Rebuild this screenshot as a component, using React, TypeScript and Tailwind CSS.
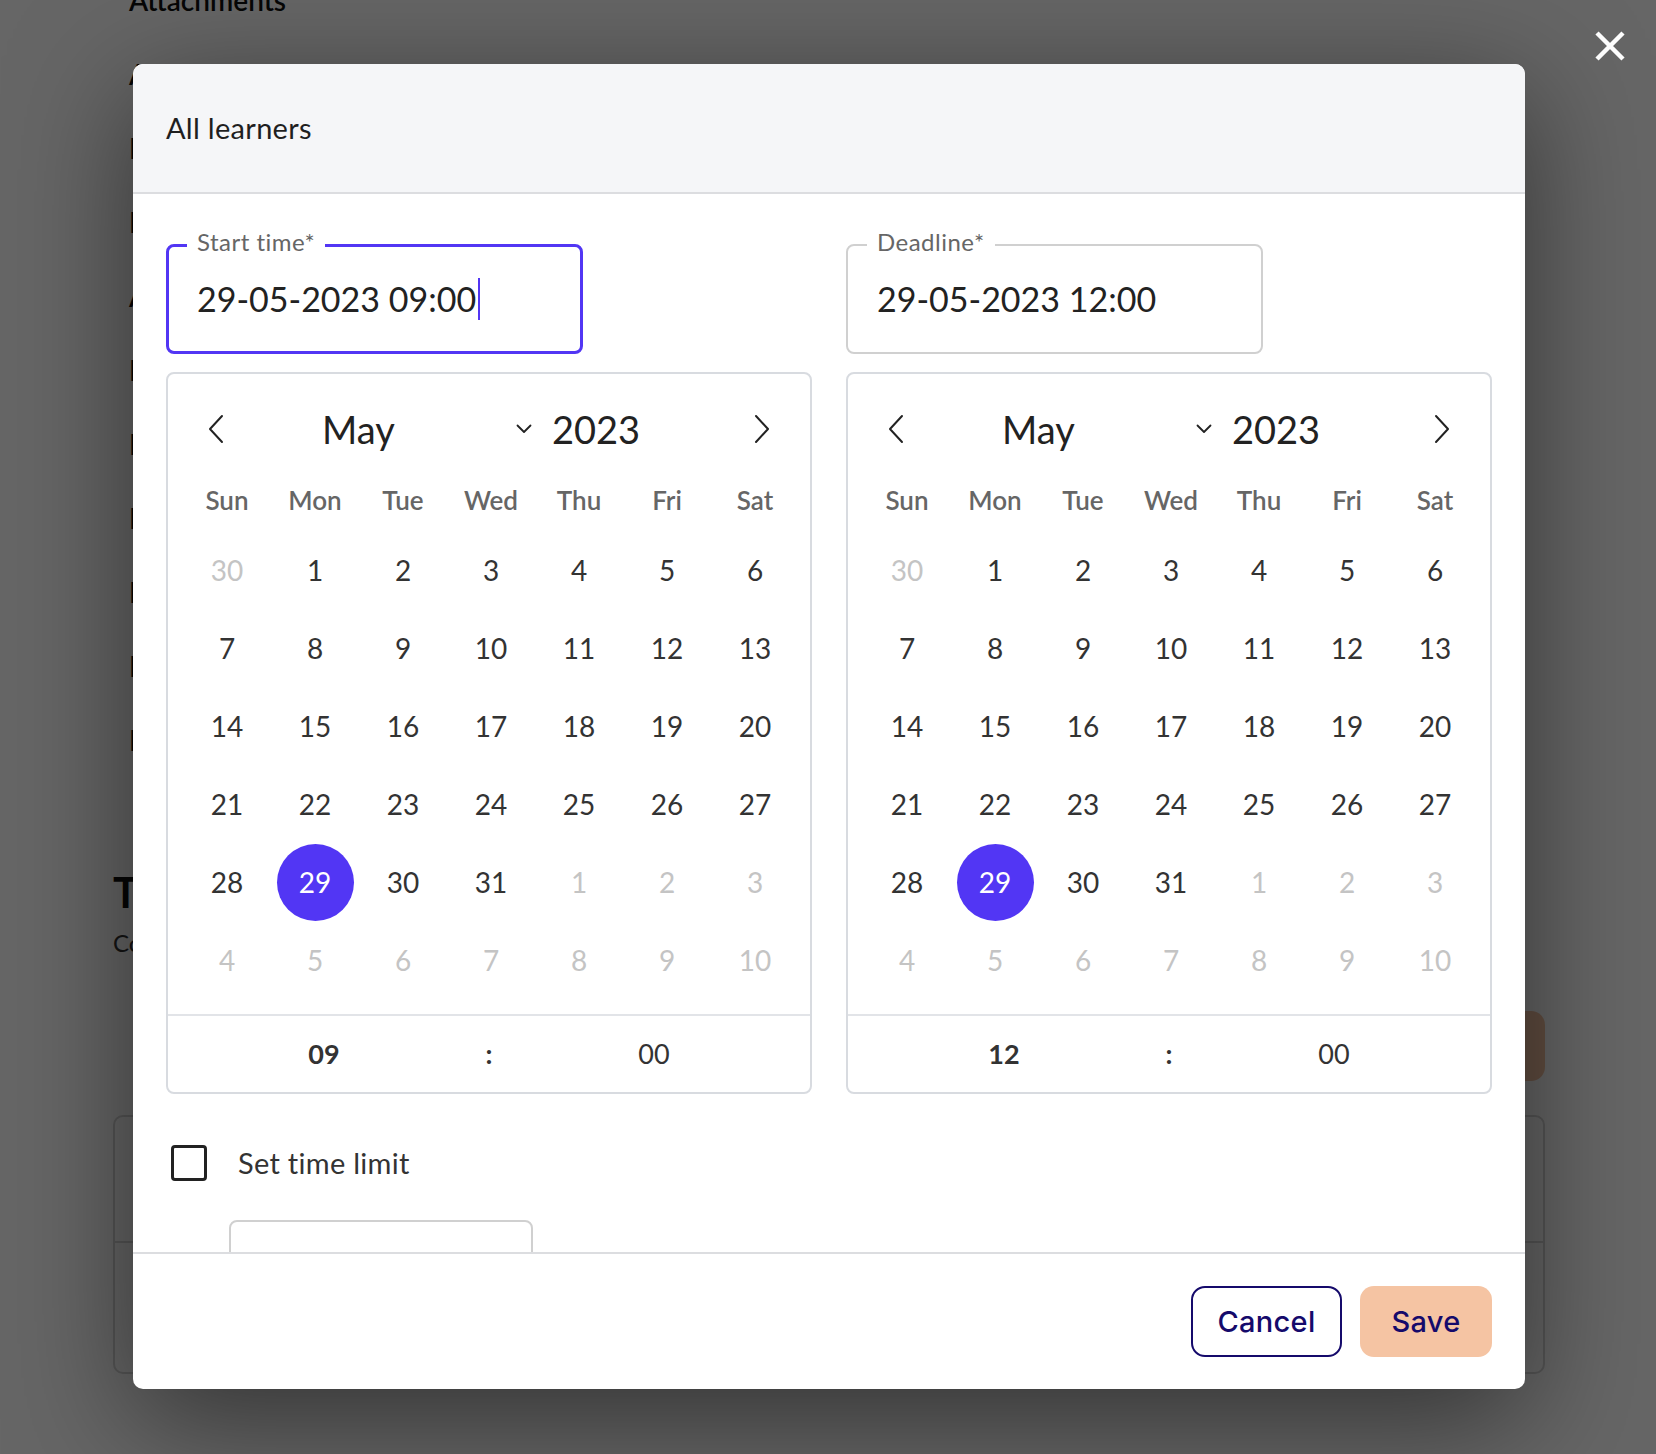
import { useState } from "react"

type Day = { n: number; muted?: boolean }

// May 2023 laid out Sun..Sat, with the tail of April and head of June
const days: Day[] = [
  { n: 30, muted: true },
  ...Array.from({ length: 31 }, (_, i) => ({ n: i + 1 })),
  ...Array.from({ length: 10 }, (_, i) => ({ n: i + 1, muted: true })),
]

const weekdays = ["Sun", "Mon", "Tue", "Wed", "Thu", "Fri", "Sat"]

const backgroundLabels = [
  "Attachments",
  "Availability",
  "Instructions",
  "Points",
  "Attempts",
  "Materials",
  "Peer review",
  "Rubric",
  "Notifications",
  "Evaluation",
  "Language",
]

const ArrowLeft = () => (
  <svg width="16" height="30" viewBox="0 0 16 30" fill="none">
    <polyline points="14,2 2,15 14,28" stroke="#222" strokeWidth="2" strokeLinejoin="round" strokeLinecap="round" />
  </svg>
)

const ArrowRight = () => (
  <svg width="16" height="30" viewBox="0 0 16 30" fill="none">
    <polyline points="2,2 14,15 2,28" stroke="#222" strokeWidth="2" strokeLinejoin="round" strokeLinecap="round" />
  </svg>
)

const CaretDown = () => (
  <svg width="16" height="10" viewBox="0 0 16 10" fill="none">
    <polyline points="1.5,1.5 8,8 14.5,1.5" stroke="#222" strokeWidth="1.8" strokeLinecap="round" strokeLinejoin="round" />
  </svg>
)

const DateInput = ({ label, value, focused }: { label: string; value: string; focused?: boolean }) => (
  <div
    className={
      focused
        ? "relative flex h-[110px] w-[417px] items-center rounded-[8px] border-[3px] border-[#5236f4] pl-[28px]"
        : "relative flex h-[110px] w-[417px] items-center rounded-[8px] border-2 border-[#d0d0d0] pl-[29px]"
    }
  >
    <span
      className={
        focused
          ? "absolute left-[18px] top-[-19px] bg-white px-[10px] text-[24px] leading-[28px] tracking-[0.02em] text-[#666]"
          : "absolute left-[19px] top-[-18px] bg-white px-[10px] text-[24px] leading-[28px] tracking-[0.02em] text-[#666]"
      }
    >
      {label}
    </span>
    <span className="text-[34px] leading-none text-[#222]">{value}</span>
    {focused && <span className="ml-[2px] h-[42px] w-[2px] bg-[#5236f4]" />}
  </div>
)

const Calendar = ({ hour }: { hour: string }) => (
  <div className="mt-[18px] flex h-[722px] w-full flex-col rounded-[8px] border-2 border-[#d8dbe0]">
    <div className="mt-[15px] flex h-[80px] items-center">
      <button className="ml-[28px] flex w-[40px] justify-center">
        <ArrowLeft />
      </button>
      <div className="flex w-[296px] items-center justify-between pl-[86px]">
        <span className="text-[38px] text-[#222]">May</span>
        <CaretDown />
      </div>
      <span className="ml-[20px] text-[38px] text-[#222]">2023</span>
      <button className="ml-auto mr-[28px] flex w-[40px] justify-center">
        <ArrowRight />
      </button>
    </div>

    <div className="grid h-[62px] grid-cols-7 items-center pl-[15px] pr-[11px] text-center text-[26px] font-semibold text-[#666]">
      {weekdays.map((d) => (
        <span key={d}>{d}</span>
      ))}
    </div>

    <div className="grid grid-cols-7 pl-[15px] pr-[11px] text-[28px]">
      {days.map((d, i) => (
        <div key={i} className="flex h-[78px] items-center justify-center">
          {!d.muted && d.n === 29 ? (
            <span className="flex h-[77px] w-[77px] items-center justify-center rounded-full bg-[#5236f4] text-white">
              {d.n}
            </span>
          ) : (
            <span className={d.muted ? "text-[#c4c4c4]" : "text-[#333]"}>{d.n}</span>
          )}
        </div>
      ))}
    </div>

    <div className="mt-auto flex h-[78px] items-center justify-center gap-[125px] border-t-2 border-[#e2e4e8] text-[27px] text-[#333]">
      <span className="w-[60px] text-center font-bold">{hour}</span>
      <span className="w-[20px] text-center font-bold">:</span>
      <span className="w-[60px] text-center">00</span>
    </div>
  </div>
)

export default function App() {
  const [limit, setLimit] = useState(false)

  return (
    <div className="relative h-[1454px] w-full overflow-hidden bg-white font-[Lato,'Noto_Sans',sans-serif]">
      {/* page underneath the dialog */}
      <div className="pl-[113px] pr-[111px]">
        <div className="-mt-[37px] w-[190px] overflow-hidden whitespace-nowrap pl-[16px]">
          {backgroundLabels.map((l, i) => (
            <div key={l} className="flex h-[74px] items-center text-[28px] font-semibold text-[#111]">
              {i < 2 ? l : l.slice(0, 1)}
            </div>
          ))}
        </div>
        <h2 className="mt-[90px] text-[42px] font-bold leading-[50px] text-[#111]">T</h2>
        <p className="mt-[11px] text-[24px] leading-[30px] text-[#333]">Co</p>
        <div className="mt-[53px] flex justify-end">
          <div className="h-[70px] w-[220px] rounded-[14px] bg-[#f5c4a3]" />
        </div>
        <div className="mt-[34px] h-[259px] rounded-[10px] border-2 border-[#d6d6d6]">
          <div className="h-[126px] border-b-2 border-[#d6d6d6]" />
        </div>
      </div>

      {/* backdrop */}
      <div className="absolute inset-0 bg-black/60" />

      <button className="absolute left-[1594px] top-[30px]">
        <svg width="32" height="32" viewBox="0 0 32 32">
          <path d="M3 3 L29 29 M29 3 L3 29" stroke="#fff" strokeWidth="4.5" />
        </svg>
      </button>

      {/* dialog */}
      <div className="absolute left-[133px] top-[64px] flex h-[1325px] w-[1392px] flex-col overflow-hidden rounded-[10px] bg-white shadow-[0_30px_120px_rgba(0,0,0,0.5)]">
        <div className="flex h-[130px] shrink-0 items-center border-b-2 border-[#dcdde0] bg-[#f5f6f8] px-[33px] text-[29px] tracking-[0.01em] text-[#1f1f1f]">
          All learners
        </div>

        <div className="h-[1058px] shrink-0 overflow-hidden px-[33px] pt-[50px]">
          <div className="grid grid-cols-2 gap-[34px]">
            <div>
              <DateInput label="Start time*" value="29-05-2023 09:00" focused />
              <Calendar hour="09" />
            </div>
            <div>
              <DateInput label="Deadline*" value="29-05-2023 12:00" />
              <Calendar hour="12" />
            </div>
          </div>

          <label className="mt-[51px] flex h-[36px] cursor-pointer items-center pl-[5px]">
            <input type="checkbox" className="sr-only" checked={limit} onChange={() => setLimit(!limit)} />
            <span className="h-[36px] w-[36px] rounded-[4px] border-[3px] border-[#222]" />
            <span className="ml-[31px] text-[29px] tracking-[0.01em] text-[#333]">Set time limit</span>
          </label>

          <div className="ml-[63px] mt-[39px] h-[80px] w-[304px] rounded-[8px] border-2 border-[#d0d0d0]" />
        </div>

        <div className="flex flex-1 items-center justify-end gap-[18px] border-t-2 border-[#dcdde0] px-[33px]">
          <button className="h-[71px] w-[151px] rounded-[14px] border-2 border-[#150a6b] font-[Inter,sans-serif] text-[29px] font-medium tracking-[0.01em] text-[#150a6b]">
            Cancel
          </button>
          <button className="h-[71px] w-[132px] rounded-[14px] bg-[#f5c4a3] font-[Inter,sans-serif] text-[29px] font-medium tracking-[0.01em] text-[#150a6b]">
            Save
          </button>
        </div>
      </div>
    </div>
  )
}
